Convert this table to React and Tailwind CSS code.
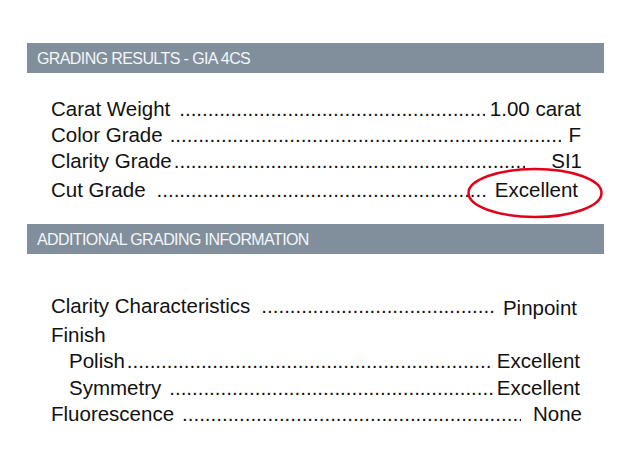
const DOTS = ".".repeat(140);

function Row({ label, value, labelCls = "", dotMl, valMl, valMr, extra = "", valCls = "" }) {
  return (
    <div className={"flex h-[26px] leading-[26px] whitespace-nowrap " + extra}>
      <span className={"shrink-0 " + labelCls}>{label}</span>
      <span className="flex-1 overflow-hidden" style={{ marginLeft: dotMl }}>
        {DOTS}
      </span>
      <span className={"shrink-0 " + valCls} style={{ marginLeft: valMl, marginRight: valMr }}>
        {value}
      </span>
    </div>
  );
}

function Header({ children }) {
  return (
    <div className="h-[30px] bg-[#818f9d] pl-[10px] pt-[2px] leading-[28px] text-[16px] tracking-[-0.6px] text-[#f4f6f8]">
      {children}
    </div>
  );
}

export default function App() {
  return (
    <div
      className="relative w-[640px] h-[475px] bg-white pt-[43px] pl-[27px] text-[#111]"
      style={{ fontFamily: '"Liberation Sans", Arial, sans-serif' }}
    >
      <div className="w-[577px]">
        <Header>GRADING RESULTS - GIA 4CS</Header>
        <div className="pl-[24px] pr-[22px] text-[20.5px]">
          <Row extra="mt-[23px]" label="Carat Weight" value="1.00 carat" dotMl={9} valMl={5} valMr={1} />
          <Row label="Color Grade" value="F" dotMl={7} valMl={7} valMr={1} />
          <Row label="Clarity Grade" value="SI1" dotMl={2} valMl={26} valMr={0} />
          <Row extra="mt-[3px]" label="Cut Grade" value="Excellent" dotMl={11} valMl={8} valMr={4} />
        </div>
        <div className="mt-[21px]">
          <Header>ADDITIONAL GRADING INFORMATION</Header>
        </div>
        <div className="pl-[24px] pr-[22px] text-[20.5px]">
          <Row extra="mt-[39px]" label="Clarity Characteristics" value="Pinpoint" dotMl={11} valMl={7} valMr={5} valCls="translate-y-[2px]" />
          <div className="mt-[3px] h-[26px] leading-[26px]">Finish</div>
          <Row label="Polish" labelCls="ml-[18px]" value="Excellent" dotMl={2} valMl={4} valMr={2} />
          <Row extra="mt-[1px]" label="Symmetry" labelCls="ml-[18px]" value="Excellent" dotMl={8} valMl={4} valMr={2} />
          <Row label="Fluorescence" value="None" dotMl={8} valMl={12} valMr={0} />
        </div>
      </div>
      <svg className="absolute left-[466px] top-[167px]" width="138" height="52" viewBox="0 0 138 52">
        <ellipse cx="69" cy="26" rx="66.5" ry="24" fill="none" stroke="#e3001b" strokeWidth="2.5" />
      </svg>
    </div>
  );
}
